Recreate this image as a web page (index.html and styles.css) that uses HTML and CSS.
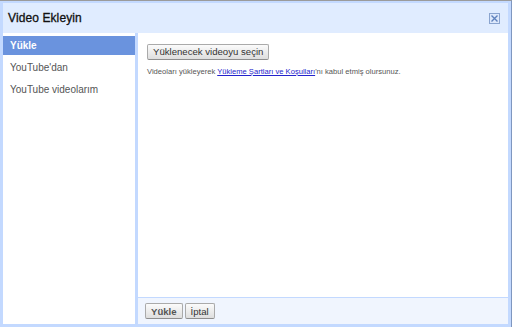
FILE: index.html
```html
<!DOCTYPE html>
<html lang="tr">
<head>
    <meta charset="UTF-8">
    <title>Video Ekleyin</title>
    <link rel="stylesheet" href="styles.css">
</head>
<body>
    <div class="dialog">
        <div class="header">
            <span class="title">Video Ekleyin</span>
            <span class="close">
                <svg width="9" height="9" viewBox="0 0 9 9">
                    <path d="M1.5 1.5 L7.5 7.5 M7.5 1.5 L1.5 7.5" stroke="#5f82bd" stroke-width="1.4"/>
                </svg>
            </span>
        </div>
        <div class="body">
            <ul class="nav">
                <li class="nav-item selected">Yükle</li>
                <li class="nav-item">YouTube'dan</li>
                <li class="nav-item">YouTube videolarım</li>
            </ul>
            <div class="main">
                <div class="content">
                    <button class="btn">Yüklenecek videoyu seçin</button>
                    <p class="terms">Videoları yükleyerek <a href="#">Yükleme Şartları ve Koşulları</a>'nı kabul etmiş olursunuz.</p>
                </div>
                <div class="footer">
                    <button class="btn btn-default">Yükle</button>
                    <button class="btn">İptal</button>
                </div>
            </div>
        </div>
    </div>
</body>
</html>
```

FILE: styles.css
```css
html, body {
    margin: 0;
    padding: 0;
}
body {
    width: 512px;
    height: 327px;
    overflow: hidden;
    font-family: "Liberation Sans", Arial, sans-serif;
}
.dialog {
    height: 327px;
    box-sizing: border-box;
    border-top: 1px solid #9b9b9b;
    border-right: 1px solid #7f97c0;
    background: #c3d9ff;
    padding: 2px 3px 3px 3px;
    display: flex;
    flex-direction: column;
}
.header {
    height: 30px;
    flex: none;
    background: #e0ecff;
    display: flex;
    align-items: center;
    justify-content: space-between;
    padding: 0 5px;
}
.title {
    font-size: 12px;
    color: #111;
    letter-spacing: 0.1px;
    -webkit-text-stroke: 0.3px #111;
}
.close {
    width: 9px;
    height: 9px;
    border: 1px solid #8aa4cf;
    background: #dde8fb;
    display: flex;
    margin-right: 3px;
}
.body {
    flex: 1;
    display: flex;
    min-height: 0;
}
.nav {
    list-style: none;
    margin: 0;
    padding: 3px 0 0 0;
    width: 132px;
    flex: none;
    background: #fff;
    border-right: 3px solid #c3d9ff;
}
.nav-item {
    height: 22px;
    line-height: 22px;
    padding-left: 7px;
    font-size: 10px;
    color: #555;
}
.nav-item.selected {
    height: 19px;
    line-height: 19px;
    margin-bottom: 2px;
    background: #6a93de;
    color: #fff;
    font-weight: bold;
}
.main {
    flex: 1;
    display: flex;
    flex-direction: column;
}
.content {
    flex: 1;
    background: #fff;
    padding: 8px 9px;
}
.btn {
    font-family: "Liberation Sans", Arial, sans-serif;
    font-size: 9.6px;
    color: #333;
    height: 16px;
    padding: 0 5px;
    margin: 0;
    border: 1px solid #aaa;
    border-bottom-color: #8e8e8e;
    border-radius: 2px;
    background: linear-gradient(#fbfbfb, #dedede);
}
.terms {
    margin: 7px 0 0 0;
    font-size: 7.6px;
    color: #555;
}
.terms a {
    color: #2323cc;
}
.footer {
    height: 27px;
    flex: none;
    border-top: 1px solid #c3d9ff;
    background: #f0f5fe;
    padding: 5px 0 0 7px;
    box-sizing: border-box;
    display: flex;
    align-items: flex-start;
    gap: 2px;
}
.btn-default {
    font-weight: bold;
    color: #555;
}
```
